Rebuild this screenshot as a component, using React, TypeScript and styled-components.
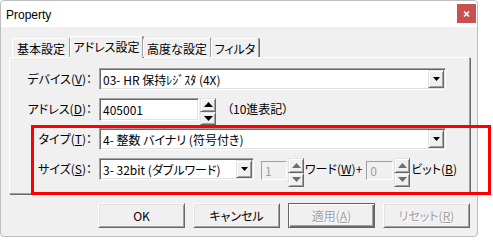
import styled, { createGlobalStyle } from 'styled-components';

const GlobalStyle = createGlobalStyle`
  html, body {
    margin: 0;
    padding: 0;
    background: #fff;
  }
  body {
    font-family: "Noto Sans CJK JP", "Noto Sans", sans-serif;
    font-size: 12px;
    color: #000;
    font-feature-settings: "palt";
  }
  * { box-sizing: border-box; }
`;

const Window = styled.div`
  width: 478px;
  border: 1px solid #bdbdbd;
  border-radius: 4px;
  background: #f0f0f0;
`;

const TitleBar = styled.div`
  height: 26px;
  background: #fff;
  display: flex;
  align-items: center;
  justify-content: space-between;
  padding: 0 1px 0 5px;
  border-radius: 4px 4px 0 0;
`;

const Title = styled.span`
  font-family: "Liberation Sans", Arial, sans-serif;
  font-size: 12px;
  margin-top: 1px;
`;

const CloseButton = styled.div`
  width: 19px;
  height: 19px;
  margin-top: -1px;
  background: #c75050;
  display: flex;
  align-items: center;
  justify-content: center;
`;

const Body = styled.div`
  padding: 9px 7px 8px 8px;
`;

const TabStrip = styled.div`
  display: flex;
  align-items: flex-end;
  height: 21px;
  padding-left: 3px;
  position: relative;
  z-index: 1;
`;

const Tab = styled.div<{ $w: number; $active?: boolean }>`
  width: ${p => p.$w}px;
  height: ${p => (p.$active ? 22 : 19)}px;
  margin-bottom: ${p => (p.$active ? -1 : 0)}px;
  padding-bottom: ${p => (p.$active ? 3 : 0)}px;
  background: #f0f0f0;
  border-top: 1px solid #fff;
  border-left: 1px solid #fff;
  border-right: 1px solid #a0a0a0;
  box-shadow: 1px 0 0 #696969;
  border-radius: 2px 2px 0 0;
  display: flex;
  align-items: center;
  justify-content: center;
  white-space: nowrap;
`;

const Panel = styled.div`
  position: relative;
  border-top: 1px solid #fff;
  border-left: 1px solid #fff;
  border-right: 1px solid #a0a0a0;
  border-bottom: 1px solid #a0a0a0;
  box-shadow: 1px 1px 0 #696969;
  padding: 10px 0 12px 0;
  display: flex;
  flex-direction: column;
  gap: 7px;
`;

const Row = styled.div`
  display: flex;
  align-items: flex-start;
  height: 23px;
`;

const Label = styled.div`
  width: 89px;
  flex: none;
  text-align: right;
  padding-right: 7px;
  line-height: 22px;
  white-space: nowrap;
`;

const Sunken = styled.div<{ $w: number; $h?: number; $disabled?: boolean }>`
  width: ${p => p.$w}px;
  height: ${p => p.$h ?? 22}px;
  flex: none;
  background: ${p => (p.$disabled ? '#f0f0f0' : '#fff')};
  color: ${p => (p.$disabled ? '#a0a0a0' : '#000')};
  border: 1px solid;
  border-color: #a0a0a0 #fff #fff #a0a0a0;
  box-shadow: ${p =>
    p.$disabled ? 'none' : 'inset 1px 1px 0 #696969, inset -1px -1px 0 #e3e3e3'};
  display: flex;
  align-items: center;
  padding-left: 3px;
  white-space: nowrap;
  overflow: hidden;
`;

const SmallBox = styled(Sunken)<{ $ml: number }>`
  margin-left: ${p => p.$ml}px;
  margin-top: 3px;
`;

const Value = styled.span`
  flex: 1;
  overflow: hidden;
`;

const DropButton = styled.div`
  width: 16px;
  height: 18px;
  flex: none;
  margin-right: 1px;
  background: #f0f0f0;
  border: 1px solid;
  border-color: #e3e3e3 #696969 #696969 #e3e3e3;
  box-shadow: inset 1px 1px 0 #fff, inset -1px -1px 0 #a0a0a0;
  display: flex;
  align-items: center;
  justify-content: center;
`;

const Spin = styled.div<{ $h: number }>`
  width: 16px;
  height: ${p => p.$h}px;
  flex: none;
  margin-left: 1px;
  display: flex;
  flex-direction: column;
`;

const SpinButton = styled.div`
  flex: 1;
  background: #f0f0f0;
  border: 1px solid;
  border-color: #e3e3e3 #696969 #696969 #e3e3e3;
  box-shadow: inset 1px 1px 0 #fff, inset -1px -1px 0 #a0a0a0;
  display: flex;
  align-items: center;
  justify-content: center;
`;

const Note = styled.span<{ $ml: number }>`
  margin-left: ${p => p.$ml}px;
  line-height: 22px;
  white-space: nowrap;
`;

const Highlight = styled.div`
  position: absolute;
  left: 21px;
  top: 67px;
  width: 460px;
  height: 70px;
  border: 3px solid #ff0000;
  pointer-events: none;
`;

const ButtonRow = styled.div`
  display: flex;
  justify-content: flex-end;
  gap: 8px;
  margin-top: 9px;
`;

const Button = styled.div<{ $disabled?: boolean; $default?: boolean }>`
  width: 87px;
  height: 25px;
  background: #f0f0f0;
  border: 1px solid;
  border-color: ${p =>
    p.$default ? '#646464' : '#fff #696969 #696969 #fff'};
  box-shadow: ${p =>
    p.$default
      ? 'inset 1px 1px 0 #fff, inset -1px -1px 0 #696969, inset -2px -2px 0 #a0a0a0'
      : 'inset 1px 1px 0 #e3e3e3, inset -1px -1px 0 #a0a0a0'};
  color: ${p => (p.$disabled ? '#a0a0a0' : '#000')};
  text-shadow: ${p => (p.$disabled ? '1px 1px 0 #fff' : 'none')};
  display: flex;
  align-items: center;
  justify-content: center;
  white-space: nowrap;
`;

function Arrow({ up, color = '#000', w = 7, h = 4 }: { up?: boolean; color?: string; w?: number; h?: number }) {
  const points = up ? `0,${h} ${w / 2},0 ${w},${h}` : `0,0 ${w},0 ${w / 2},${h}`;
  return (
    <svg width={w} height={h} viewBox={`0 0 ${w} ${h}`}>
      <polygon points={points} fill={color} />
    </svg>
  );
}

function ComboBox({ width, value }: { width: number; value: string }) {
  return (
    <Sunken $w={width}>
      <Value>{value}</Value>
      <DropButton>
        <Arrow />
      </DropButton>
    </Sunken>
  );
}

function Spinner({ height, disabled }: { height: number; disabled?: boolean }) {
  const color = disabled ? '#6d6d6d' : '#000';
  return (
    <Spin $h={height}>
      <SpinButton>
        <Arrow up color={color} w={9} h={5} />
      </SpinButton>
      <SpinButton>
        <Arrow color={color} w={9} h={5} />
      </SpinButton>
    </Spin>
  );
}

export default function App() {
  return (
    <>
      <GlobalStyle />
      <Window>
        <TitleBar>
          <Title>Property</Title>
          <CloseButton>
            <svg width="7" height="6" viewBox="0 0 7 6">
              <path d="M1 0.5 L6 5.5 M6 0.5 L1 5.5" stroke="#fff" strokeWidth="1.6" />
            </svg>
          </CloseButton>
        </TitleBar>
        <Body>
          <TabStrip>
            <Tab $w={58}>基本設定</Tab>
            <Tab $w={73} $active>アドレス設定</Tab>
            <Tab $w={68}>高度な設定</Tab>
            <Tab $w={48}>フィルタ</Tab>
          </TabStrip>
          <Panel>
            <Row>
              <Label>デバイス(<u>V</u>)：</Label>
              <ComboBox width={347} value="03- HR 保持ﾚｼﾞｽﾀ (4X)" />
            </Row>
            <Row>
              <Label>アドレス(<u>D</u>)：</Label>
              <Sunken $w={100} $h={23}>405001</Sunken>
              <Spinner height={27} />
              <Note $ml={11}>（10進表記）</Note>
            </Row>
            <Row>
              <Label>タイプ(<u>T</u>)：</Label>
              <ComboBox width={347} value="4- 整数 バイナリ (符号付き)" />
            </Row>
            <Row>
              <Label>サイズ(<u>S</u>)：</Label>
              <ComboBox width={155} value="3- 32bit (ダブルワード)" />
              <SmallBox $w={26} $h={19} $ml={7} $disabled>1</SmallBox>
              <Spinner height={29} disabled />
              <Note $ml={1}>ワード(<u>W</u>)+</Note>
              <SmallBox $w={27} $h={19} $ml={4} $disabled>0</SmallBox>
              <Spinner height={29} disabled />
              <Note $ml={1}>ビット(<u>B</u>)</Note>
            </Row>
            <Highlight />
          </Panel>
          <ButtonRow>
            <Button>OK</Button>
            <Button>キャンセル</Button>
            <Button $disabled $default>適用(<u>A</u>)</Button>
            <Button $disabled>リセット(<u>R</u>)</Button>
          </ButtonRow>
        </Body>
      </Window>
    </>
  );
}
